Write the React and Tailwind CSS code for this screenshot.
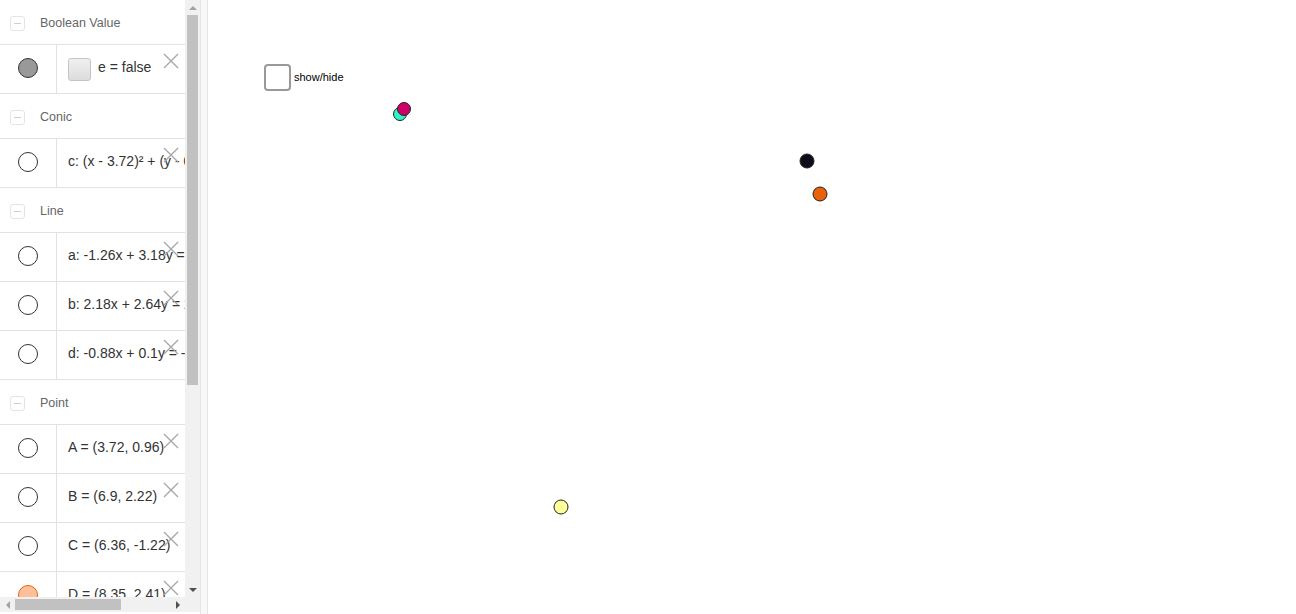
import React from 'react';

const sans = { fontFamily: '"Liberation Sans", Arial, sans-serif' };

// Section header with collapse box
const Header = ({ title }) => (
  <div className="h-[45px] border-b border-[#e2e2e2] flex items-center shrink-0 pt-[3px]">
    <div className="ml-[10px] w-[15px] h-[15px] border border-[#e4e4e4] rounded-[3px] flex items-center justify-center">
      <div className="w-[7px] h-px bg-[#cfcfcf]" />
    </div>
    <span className="ml-[15px] text-[12.5px] text-[#666]" style={sans}>{title}</span>
  </div>
);

const CloseX = () => (
  <svg className="absolute left-[162px] top-[7px]" width="18" height="18" viewBox="0 0 18 18">
    <path d="M2 2 L16 16 M16 2 L2 16" stroke="#a8a8a8" strokeWidth="1.4" fill="none" />
  </svg>
);

const Marble = ({ fill = 'transparent', stroke = '#333' }) => (
  <div
    className="w-[20px] h-[20px] rounded-full border-[1.5px]"
    style={{ backgroundColor: fill, borderColor: stroke }}
  />
);

const Row = ({ marble, children }) => (
  <div className="h-[49px] border-b border-[#e2e2e2] flex shrink-0 relative">
    <div className="w-[57px] border-r border-[#e2e2e2] flex items-center justify-center shrink-0 pb-[2px] pr-px">
      {marble || <Marble />}
    </div>
    <div className="flex items-center pl-[11px] pb-[3px] whitespace-nowrap text-[14px] text-[#333]" style={sans}>
      {children}
    </div>
    <CloseX />
  </div>
);

const Arrow = ({ dir }) => {
  const d = {
    up: 'M0 4 L4 0 L8 4 Z',
    down: 'M0 0 L8 0 L4 4 Z',
    left: 'M4 0 L4 8 L0 4 Z',
    right: 'M0 0 L0 8 L4 4 Z',
  }[dir];
  const vert = dir === 'up' || dir === 'down';
  return (
    <svg width={vert ? 8 : 4} height={vert ? 4 : 8} viewBox={vert ? '0 0 8 4' : '0 0 4 8'}>
      <path d={d} fill={dir === 'right' || dir === 'down' ? '#505050' : '#a3a3a3'} />
    </svg>
  );
};

const Point = ({ x, y, r, fill }) => (
  <circle cx={x} cy={y} r={r} fill={fill} stroke="#222" strokeWidth="1" />
);

export default function App() {
  return (
    <div className="w-[1296px] h-[614px] flex bg-white overflow-hidden">
      {/* Algebra view */}
      <div className="w-[200px] h-full flex flex-col shrink-0">
        <div className="flex h-[597px]">
          <div className="w-[185px] overflow-hidden flex flex-col">
            <Header title="Boolean Value" />
            <Row marble={<Marble fill="#999" stroke="#333" />}>
              <div className="w-[23px] h-[23px] rounded-[3px] border border-[#c4c4c4] bg-gradient-to-b from-[#f0f0f0] to-[#dcdcdc] mr-[7px] mt-[3px]" />
              <span>e = false</span>
            </Row>
            <Header title="Conic" />
            <Row>c: (x - 3.72)² + (y - 0.96)² = 10.13</Row>
            <Header title="Line" />
            <Row>a: -1.26x + 3.18y = -1.65</Row>
            <Row>b: 2.18x + 2.64y = 20.91</Row>
            <Row>d: -0.88x + 0.1y = -7.11</Row>
            <Header title="Point" />
            <Row>A = (3.72, 0.96)</Row>
            <Row>B = (6.9, 2.22)</Row>
            <Row>C = (6.36, -1.22)</Row>
            <Row marble={<Marble fill="#ffbf99" stroke="#e0661a" />}>D = (8.35, 2.41)</Row>
          </div>
          {/* vertical scrollbar */}
          <div className="w-[15px] bg-[#f1f1f1] flex flex-col items-center">
            <div className="h-[15px] flex items-center justify-center"><Arrow dir="up" /></div>
            <div className="w-[11px] h-[370px] bg-[#c1c1c1]" />
            <div className="flex-1" />
            <div className="h-[15px] flex items-center justify-center"><Arrow dir="down" /></div>
          </div>
        </div>
        {/* horizontal scrollbar */}
        <div className="flex h-[17px]">
          <div className="w-[185px] h-[15px] bg-[#f1f1f1] flex items-center">
            <div className="w-[15px] flex justify-center"><Arrow dir="left" /></div>
            <div className="w-[106px] h-[11px] bg-[#c1c1c1]" />
            <div className="flex-1" />
            <div className="w-[15px] flex justify-center"><Arrow dir="right" /></div>
          </div>
          <div className="w-[15px] h-[15px] bg-[#f1f1f1]" />
        </div>
      </div>

      {/* splitter */}
      <div className="w-[8px] h-full bg-[#f8f8f8] border-l border-r border-[#e6e6e6] shrink-0" />

      {/* Graphics view */}
      <div className="flex-1 relative">
        <div className="absolute left-[56px] top-[64px] flex items-center">
          <div className="w-[27px] h-[27px] border-2 border-[#999] rounded-[4px] bg-white" />
          <span className="ml-[3px] text-[11px] text-black" style={sans}>show/hide</span>
        </div>
        <svg className="absolute inset-0" width="1088" height="614">
          <Point x={192} y={114} r={6.5} fill="#33f0c8" />
          <Point x={196} y={109} r={6.5} fill="#cc0066" />
          <Point x={599} y={161} r={7} fill="#0d0d1a" />
          <Point x={612} y={194} r={7} fill="#e8620a" />
          <Point x={353} y={507} r={7} fill="#ffff99" />
        </svg>
      </div>
    </div>
  );
}
